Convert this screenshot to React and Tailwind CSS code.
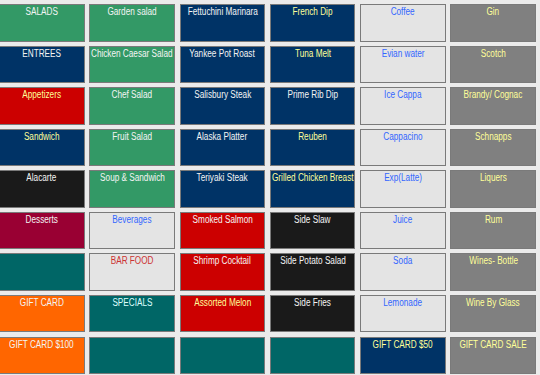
import React from "react";

const C = {
  green: "bg-[#339966]",
  navy: "bg-[#003366]",
  red: "bg-[#cc0000]",
  black: "bg-[#1a1a1a]",
  crimson: "bg-[#990033]",
  teal: "bg-[#006666]",
  orange: "bg-[#ff6600]",
  light: "bg-[#e4e4e4]",
  gray: "bg-[#808080]",
};

const T = {
  w: "text-[#f4f4f4]",
  y: "text-[#ffff99]",
  b: "text-[#3366ff]",
  r: "text-[#cc3333]",
  c: "text-[#ddffff]",
};

const rows = [
  [["SALADS", "green", "w"], ["Garden salad", "green", "w"], ["Fettuchini Marinara", "navy", "w"], ["French Dip", "navy", "y"], ["Coffee", "light", "b"], ["Gin", "gray", "y"]],
  [["ENTREES", "navy", "w"], ["Chicken Caesar Salad", "green", "w"], ["Yankee Pot Roast", "navy", "w"], ["Tuna Melt", "navy", "y"], ["Evian water", "light", "b"], ["Scotch", "gray", "y"]],
  [["Appetizers", "red", "y"], ["Chef Salad", "green", "w"], ["Salisbury Steak", "navy", "w"], ["Prime Rib Dip", "navy", "w"], ["Ice Cappa", "light", "b"], ["Brandy/ Cognac", "gray", "y"]],
  [["Sandwich", "navy", "y"], ["Fruit Salad", "green", "w"], ["Alaska Platter", "navy", "w"], ["Reuben", "navy", "y"], ["Cappacino", "light", "b"], ["Schnapps", "gray", "y"]],
  [["Alacarte", "black", "w"], ["Soup & Sandwich", "green", "w"], ["Teriyaki Steak", "navy", "w"], ["Grilled Chicken Breast", "navy", "y"], ["Exp(Latte)", "light", "b"], ["Liquers", "gray", "y"]],
  [["Desserts", "crimson", "w"], ["Beverages", "light", "b"], ["Smoked Salmon", "red", "w"], ["Side Slaw", "black", "w"], ["Juice", "light", "b"], ["Rum", "gray", "y"]],
  [["", "teal", "w"], ["BAR FOOD", "light", "r"], ["Shrimp Cocktail", "red", "w"], ["Side Potato Salad", "black", "w"], ["Soda", "light", "b"], ["Wines- Bottle", "gray", "y"]],
  [["GIFT CARD", "orange", "w"], ["SPECIALS", "teal", "c"], ["Assorted Melon", "red", "y"], ["Side Fries", "black", "w"], ["Lemonade", "light", "b"], ["Wine By Glass", "gray", "y"]],
  [["GIFT CARD $100", "orange", "w"], ["", "teal", "w"], ["", "teal", "w"], ["", "teal", "w"], ["GIFT CARD $50", "navy", "y"], ["GIFT CARD SALE", "gray", "y"]],
];

export default function App() {
  return (
    <div
      className="w-[540px] h-[375px] overflow-hidden bg-[#ebebeb] pt-[4px]"
      style={{ fontFamily: '"Liberation Sans", Arial, sans-serif' }}
    >
      <div className="ml-[-1px] grid grid-cols-[repeat(6,85.5px)] auto-rows-[37.5px] gap-x-[4.8px] gap-y-[4.07px]">
        {rows.flat().map(([label, bg, tc], i) => (
          <div
            key={i}
            className={`${C[bg]} border border-[#7a7a7a] flex justify-center overflow-hidden pt-[1px]`}
          >
            <span
              className={`${T[tc]} inline-block h-[12px] whitespace-nowrap text-[10px] leading-[12px] scale-x-[0.82] origin-center`}
            >
              {label}
            </span>
          </div>
        ))}
      </div>
    </div>
  );
}
